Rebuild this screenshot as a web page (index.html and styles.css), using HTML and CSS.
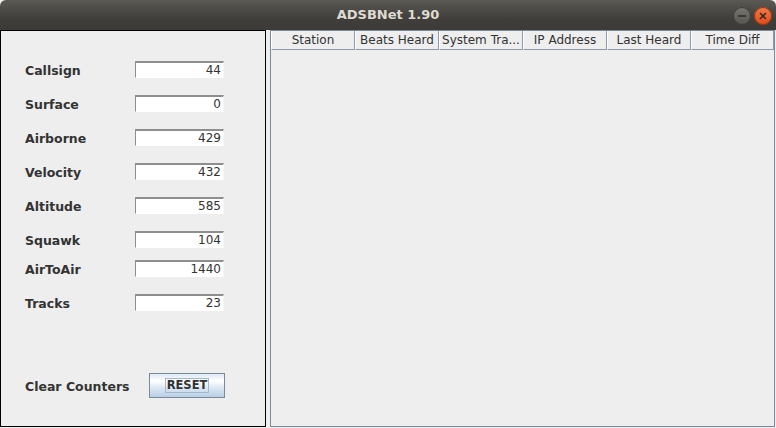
FILE: index.html
```html
<!DOCTYPE html>
<html>
<head>
<meta charset="utf-8">
<link rel="stylesheet" href="styles.css">
</head>
<body>
<div class="window">
  <div class="titlebar">
    <span class="title">ADSBNet 1.90</span>
    <div class="controls">
      <span class="wbtn wbtn-min"><svg width="18" height="18" viewBox="0 0 18 18"><rect x="5" y="8" width="8" height="2" fill="#3a3935"/></svg></span>
      <span class="wbtn wbtn-close"><svg width="18" height="18" viewBox="0 0 18 18"><path d="M6 6 L12 12 M12 6 L6 12" stroke="#3c2a22" stroke-width="1.6" fill="none"/></svg></span>
    </div>
  </div>
  <div class="content">
    <div class="stats">
      <div class="rows">
        <div class="row"><span class="label">Callsign</span><span class="field">44</span></div>
        <div class="row"><span class="label">Surface</span><span class="field">0</span></div>
        <div class="row"><span class="label">Airborne</span><span class="field">429</span></div>
        <div class="row"><span class="label">Velocity</span><span class="field">432</span></div>
        <div class="row"><span class="label">Altitude</span><span class="field">585</span></div>
        <div class="row"><span class="label">Squawk</span><span class="field">104</span></div>
        <div class="row row-tight"><span class="label">AirToAir</span><span class="field">1440</span></div>
        <div class="row"><span class="label">Tracks</span><span class="field">23</span></div>
      </div>
      <div class="reset-row">
        <span class="label label-wide">Clear Counters</span>
        <button class="reset"><span class="focus">RESET</span></button>
      </div>
    </div>
    <div class="table-pane">
      <div class="thead">
        <div class="th">Station</div>
        <div class="th">Beats Heard</div>
        <div class="th">System Tra...</div>
        <div class="th">IP Address</div>
        <div class="th">Last Heard</div>
        <div class="th th-last">Time Diff</div>
      </div>
      <div class="tbody"></div>
    </div>
  </div>
</div>
</body>
</html>
```

FILE: styles.css
```css
* { box-sizing: border-box; }
html, body {
  margin: 0;
  padding: 0;
}
body {
  width: 776px;
  height: 428px;
  overflow: hidden;
  background: #eeeeee;
  font-family: "DejaVu Sans", sans-serif;
  color: #333333;
}
.window {
  width: 776px;
  height: 428px;
}
.titlebar {
  height: 30px;
  display: grid;
  grid-template-columns: 1fr auto 1fr;
  align-items: center;
  background: linear-gradient(#5a5954, #403f3b 60%, #3b3a36);
  border-radius: 6px 6px 0 0;
}
.title {
  grid-column: 2;
  color: #dfdbd2;
  font-weight: bold;
  font-size: 13px;
  line-height: 16px;
}
.controls {
  grid-column: 3;
  justify-self: end;
  display: flex;
  gap: 3px;
  padding-right: 4px;
  padding-top: 1px;
}
.wbtn {
  width: 18px;
  height: 18px;
  border-radius: 50%;
  display: block;
}
.wbtn svg { display: block; }
.wbtn-min {
  background: linear-gradient(#77766f, #55544f);
  box-shadow: inset 0 0 0 1px #3a3935;
}
.wbtn-close {
  background: linear-gradient(#f47a4a, #dd4b17);
  box-shadow: inset 0 0 0 1px #8a3514;
}
.content {
  display: flex;
  gap: 4px;
}
.stats {
  width: 266px;
  height: 397px;
  border: 1px solid #000;
  padding: 30px 0 0 24px;
}
.rows {
  display: flex;
  flex-direction: column;
}
.row {
  display: flex;
  align-items: center;
  height: 17px;
  margin-top: 17px;
}
.row:first-child { margin-top: 0; }
.row.row-tight { margin-top: 12px; }
.label {
  width: 110px;
  font-weight: bold;
  font-size: 12.5px;
  color: #333;
  padding-top: 2px;
  white-space: nowrap;
}
.label-wide { width: 124px; padding-top: 1px; }
.field {
  width: 89px;
  height: 17px;
  background: #fff;
  border-top: 2px solid #8e8e8e;
  border-left: 1px solid #8e8e8e;
  border-right: 1px solid #f6f6f6;
  border-bottom: 1px solid #fff;
  font-size: 12px;
  line-height: 14px;
  text-align: right;
  padding-right: 2px;
  color: #333;
}
.reset-row {
  display: flex;
  align-items: center;
  height: 25px;
  margin-top: 62px;
}
.reset {
  width: 76px;
  height: 25px;
  margin: 0;
  padding: 0;
  border: 1px solid #7a8a99;
  background: linear-gradient(#dde8f3 0%, #ffffff 30%, #dde8f3 60%, #b8cfe5 100%);
  font-family: "DejaVu Sans", sans-serif;
  font-weight: bold;
  font-size: 11.5px;
  color: #333;
  display: flex;
  justify-content: center;
  align-items: center;
}
.focus {
  border: 1px solid #a3b8cc;
  padding: 0 1px;
  line-height: 13px;
}
.table-pane {
  width: 505px;
  height: 397px;
  border: 1px solid #7a8a99;
}
.thead {
  display: flex;
  height: 19px;
}
.th {
  width: 84px;
  height: 19px;
  border-left: 1px solid #ffffff;
  border-right: 1px solid #8b9bab;
  border-bottom: 1px solid #8b9bab;
  font-size: 12px;
  line-height: 18px;
  text-align: center;
  white-space: nowrap;
  overflow: hidden;
  color: #333;
}
.th-last { width: 83px; }
```
